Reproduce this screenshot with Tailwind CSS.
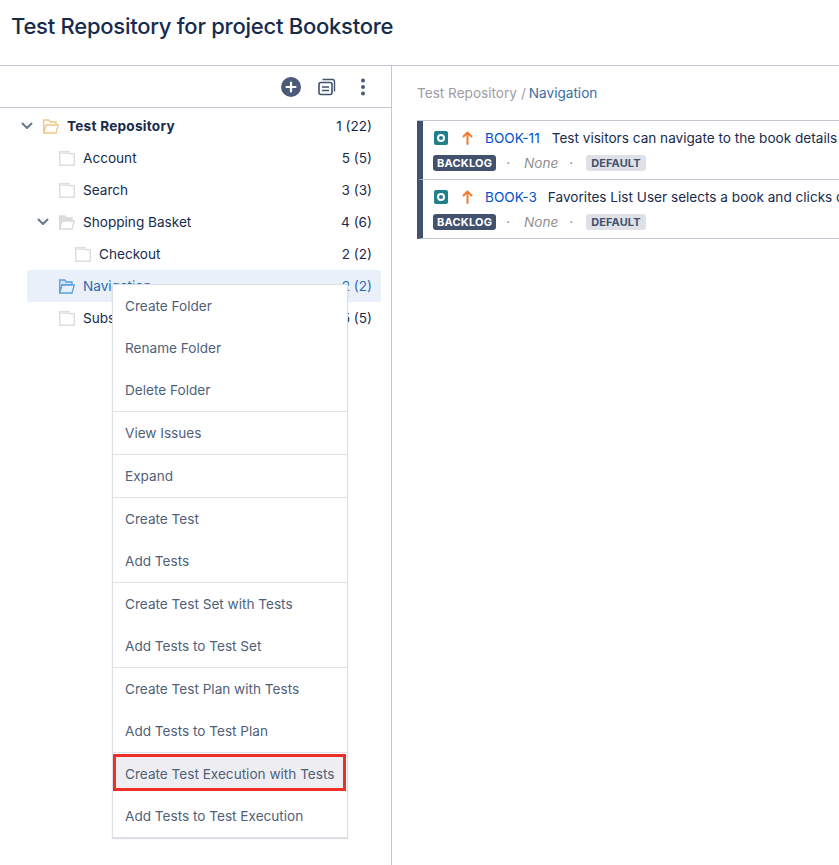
<!DOCTYPE html>
<html lang="en">
<head>
    <meta charset="UTF-8">
    <title>Test Repository</title>
    <script src="https://cdn.jsdelivr.net/npm/@tailwindcss/browser@4"></script>
</head>
<body class="h-[865px] w-[839px] overflow-hidden bg-white font-['Inter',sans-serif] text-[13.6px] text-[#172b4d]">
    <div class="h-[66px] border-b border-[#c1c7d0] pl-[11px] pt-[11px]">
        <h1 class="text-[22px] leading-[30px] font-medium tracking-[-0.25px] text-[#172b4d]">Test Repository for project Bookstore</h1>
    </div>
    <div class="flex h-[799px]">
        <!-- tree panel -->
        <div class="relative w-[392px] shrink-0 border-r border-[#c1c7d0]">
            <div class="flex h-[42px] items-center border-b border-[#c1c7d0] pl-[281px]">
                <svg class="h-5 w-5" viewBox="0 0 20 20"><circle cx="10" cy="10" r="10" fill="#4a5a78"/><path d="M10 5.500v9M5.500 10h9" stroke="#fff" stroke-width="2.200" stroke-linecap="round"/></svg>
                <svg class="ml-[17px] h-[18px] w-[18px]" viewBox="0 0 18 18" fill="none" stroke="#42526e"><rect x="1" y="4.500" width="13" height="12" rx="2" stroke-width="1.600"/><path d="M4 9h7M4 12.500h7" stroke-width="1.500"/><path d="M4.500 1.500h10a2 2 0 0 1 2 2v10" stroke-width="1.400"/></svg>
                <svg class="ml-6 h-[18px] w-1.5" viewBox="0 0 6 18" fill="#4a5a78"><circle cx="3" cy="2.500" r="2"/><circle cx="3" cy="9" r="2"/><circle cx="3" cy="15.500" r="2"/></svg>
            </div>
            <div class="pt-[2px]">
                <div class="flex h-8 items-center pr-[19px] pl-[21px]">
                    <svg class="h-[10px] w-3" viewBox="0 0 12 10" fill="none"><path d="M1.500 2.500 6 7l4.500-4.500" stroke="#6b778c" stroke-width="2" stroke-linecap="round" stroke-linejoin="round"/></svg>
                    <svg class="ml-[10px] h-[15px] w-4" viewBox="0 0 16 15" fill="none" stroke="#f3c583" stroke-width="1.300"><path d="M.7 14V1h5l1.500 2h5.800v3M.7 14h12.300l2.300-8H3L.7 14Z"/></svg>
                    <span class="ml-2 font-bold tracking-[0.25px]">Test Repository</span>
                    <span class="ml-auto">1 (22)</span>
                </div>
                <div class="flex h-8 items-center pr-[19px] pl-[59px]">
                    <svg class="h-[15px] w-4" viewBox="0 0 16 15" fill="#fff" stroke="#dedede" stroke-width="1.500"><path d="M.75 .75h9l1 2h4.500v11.500H.75Z"/><path d="M1 1.500h8.500l.5 1.500H1Z" fill="#e4e4e4" stroke="none"/></svg>
                    <span class="ml-2">Account</span>
                    <span class="ml-auto">5 (5)</span>
                </div>
                <div class="flex h-8 items-center pr-[19px] pl-[59px]">
                    <svg class="h-[15px] w-4" viewBox="0 0 16 15" fill="#fff" stroke="#dedede" stroke-width="1.500"><path d="M.75 .75h9l1 2h4.500v11.500H.75Z"/><path d="M1 1.500h8.500l.5 1.500H1Z" fill="#e4e4e4" stroke="none"/></svg>
                    <span class="ml-2">Search</span>
                    <span class="ml-auto">3 (3)</span>
                </div>
                <div class="flex h-8 items-center pr-[19px] pl-[37px]">
                    <svg class="h-[10px] w-3" viewBox="0 0 12 10" fill="none"><path d="M1.500 2.500 6 7l4.500-4.500" stroke="#6b778c" stroke-width="2" stroke-linecap="round" stroke-linejoin="round"/></svg>
                    <svg class="ml-[10px] h-[15px] w-4" viewBox="0 0 16 15" fill="none" stroke="#d8d8d8" stroke-width="1.300"><path d="M.7 1h5l1.500 2h5.800v3H3L.7 14V1Z" fill="#dcdcdc"/><path d="M.7 14h12.300l2.300-8H3Z" fill="#fff"/></svg>
                    <span class="ml-2">Shopping Basket</span>
                    <span class="ml-auto">4 (6)</span>
                </div>
                <div class="flex h-8 items-center pr-[19px] pl-[75px]">
                    <svg class="h-[15px] w-4" viewBox="0 0 16 15" fill="#fff" stroke="#dedede" stroke-width="1.500"><path d="M.75 .75h9l1 2h4.500v11.500H.75Z"/><path d="M1 1.500h8.500l.5 1.500H1Z" fill="#e4e4e4" stroke="none"/></svg>
                    <span class="ml-2">Checkout</span>
                    <span class="ml-auto">2 (2)</span>
                </div>
                <div class="ml-[27px] mr-[10px] flex h-8 items-center rounded-[2px] bg-[#e9f0f9] pr-[9px] pl-[32px] text-[#2d6cb0]">
                    <svg class="h-[15px] w-4" viewBox="0 0 16 15" fill="none" stroke="#5a9fe0" stroke-width="1.300"><path d="M.7 1h5l1.500 2h5.800v3H3L.7 14V1Z" fill="#cfe3f7"/><path d="M.7 14h12.300l2.300-8H3Z" fill="#e9f0f9"/></svg>
                    <span class="ml-2">Navigation</span>
                    <span class="ml-auto">2 (2)</span>
                </div>
                <div class="flex h-8 items-center pr-[19px] pl-[59px]">
                    <svg class="h-[15px] w-4" viewBox="0 0 16 15" fill="#fff" stroke="#dedede" stroke-width="1.500"><path d="M.75 .75h9l1 2h4.500v11.500H.75Z"/><path d="M1 1.500h8.500l.5 1.500H1Z" fill="#e4e4e4" stroke="none"/></svg>
                    <span class="ml-2">Subscriptions</span>
                    <span class="ml-auto">5 (5)</span>
                </div>
            </div>

            <!-- context menu -->
            <div class="absolute top-[218px] left-[112px] w-[236px] border border-[#dcdfe4] bg-white text-[#505f79] shadow-[0_1px_1px_rgba(9,30,66,0.15)]">
                <div class="border-b border-[#dfe1e6]">
                    <div class="flex h-[42px] items-center pl-3">Create Folder</div>
                    <div class="flex h-[42px] items-center pl-3">Rename Folder</div>
                    <div class="flex h-[42px] items-center pl-3">Delete Folder</div>
                </div>
                <div class="border-b border-[#dfe1e6]">
                    <div class="flex h-[42px] items-center pl-3">View Issues</div>
                </div>
                <div class="border-b border-[#dfe1e6]">
                    <div class="flex h-[42px] items-center pl-3">Expand</div>
                </div>
                <div class="border-b border-[#dfe1e6]">
                    <div class="flex h-[42px] items-center pl-3">Create Test</div>
                    <div class="flex h-[42px] items-center pl-3">Add Tests</div>
                </div>
                <div class="border-b border-[#dfe1e6]">
                    <div class="flex h-[42px] items-center pl-3">Create Test Set with Tests</div>
                    <div class="flex h-[42px] items-center pl-3">Add Tests to Test Set</div>
                </div>
                <div class="border-b border-[#dfe1e6]">
                    <div class="flex h-[42px] items-center pl-3">Create Test Plan with Tests</div>
                    <div class="flex h-[42px] items-center pl-3">Add Tests to Test Plan</div>
                </div>
                <div>
                    <div class="h-[42px] pt-[1px]">
                        <div class="mr-[1px] flex h-[37px] items-center border-[3px] border-[#f02d26] bg-[#eeeef2] pl-[9px] pt-[4px]">Create Test Execution with Tests</div>
                    </div>
                    <div class="flex h-[42px] items-center pl-3">Add Tests to Test Execution</div>
                </div>
            </div>
        </div>

        <!-- issue list -->
        <div class="min-w-0 flex-1 pl-[25px]">
            <div class="flex h-[54px] items-center text-[#a19ca1]">
                <span>Test Repository</span>
                <span class="ml-1">/</span>
                <span class="ml-[3px] text-[#3a6ea5]">Navigation</span>
            </div>
            <div class="border-t border-[#c1c7d0]">
                <div class="h-[59px] overflow-hidden border-b border-[#c1c7d0] border-l-[6px] border-l-[#42526e] pl-[10px]">
                    <div class="flex h-[34px] items-center whitespace-nowrap">
                        <svg class="ml-[1px] h-[14px] w-[14px] shrink-0" viewBox="0 0 14 14"><rect width="14" height="14" rx="2" fill="#1f7f8c"/><circle cx="7" cy="7" r="3" fill="none" stroke="#fff" stroke-width="2"/></svg>
                        <svg class="ml-[14px] h-[14px] w-[11px] shrink-0" viewBox="0 0 11 14" fill="none" stroke="#ef7c2e" stroke-width="2" stroke-linecap="round" stroke-linejoin="round"><path d="M5.500 13V1.500M1.500 5.500l4-4 4 4"/></svg>
                        <span class="ml-[12px] text-[#0052cc]">BOOK-11</span>
                        <span class="ml-[12px]">Test visitors can navigate to the book details</span>
                    </div>
                    <div class="flex h-[16px] items-center">
                        <span class="rounded-[3px] bg-[#42526e] px-1 text-[11px] leading-[16px] font-bold tracking-[0.2px] text-white">BACKLOG</span>
                        <span class="ml-[10px] text-[#7a869a]">·</span>
                        <span class="ml-[14px] text-[#8f8f8f] italic">None</span>
                        <span class="ml-[11px] text-[#7a869a]">·</span>
                        <span class="ml-[13px] rounded-[3px] bg-[#dfe1e6] px-[5px] text-[11px] leading-[16px] font-bold tracking-[0.1px] text-[#42526e]">DEFAULT</span>
                    </div>
                </div>
                <div class="h-[59px] overflow-hidden border-b border-[#c1c7d0] border-l-[6px] border-l-[#42526e] pl-[10px]">
                    <div class="flex h-[34px] items-center whitespace-nowrap">
                        <svg class="ml-[1px] h-[14px] w-[14px] shrink-0" viewBox="0 0 14 14"><rect width="14" height="14" rx="2" fill="#1f7f8c"/><circle cx="7" cy="7" r="3" fill="none" stroke="#fff" stroke-width="2"/></svg>
                        <svg class="ml-[14px] h-[14px] w-[11px] shrink-0" viewBox="0 0 11 14" fill="none" stroke="#ef7c2e" stroke-width="2" stroke-linecap="round" stroke-linejoin="round"><path d="M5.500 13V1.500M1.500 5.500l4-4 4 4"/></svg>
                        <span class="ml-[12px] text-[#0052cc]">BOOK-3</span>
                        <span class="ml-[11px]">Favorites List User selects a book and clicks on</span>
                    </div>
                    <div class="flex h-[16px] items-center">
                        <span class="rounded-[3px] bg-[#42526e] px-1 text-[11px] leading-[16px] font-bold tracking-[0.2px] text-white">BACKLOG</span>
                        <span class="ml-[10px] text-[#7a869a]">·</span>
                        <span class="ml-[14px] text-[#8f8f8f] italic">None</span>
                        <span class="ml-[11px] text-[#7a869a]">·</span>
                        <span class="ml-[13px] rounded-[3px] bg-[#dfe1e6] px-[5px] text-[11px] leading-[16px] font-bold tracking-[0.1px] text-[#42526e]">DEFAULT</span>
                    </div>
                </div>
            </div>
        </div>
    </div>
</body>
</html>
